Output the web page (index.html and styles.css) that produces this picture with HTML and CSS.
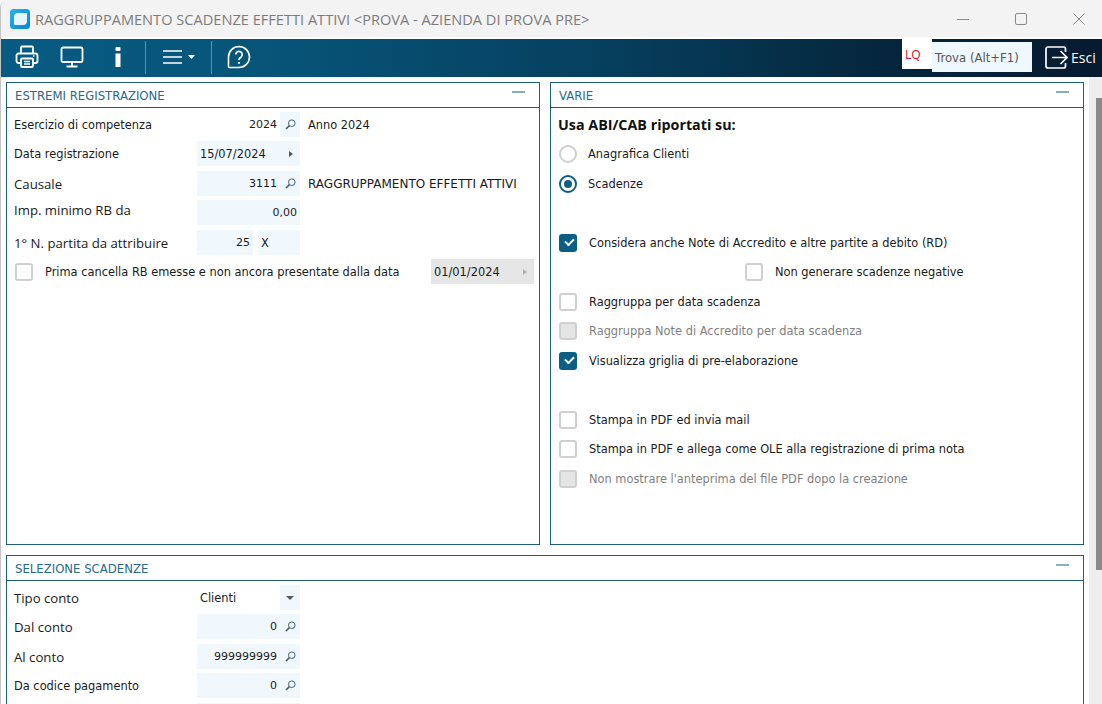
FILE: index.html
```html
<!DOCTYPE html>
<html lang="it">
<head>
<meta charset="utf-8">
<title>Raggruppamento scadenze effetti attivi</title>
<link rel="stylesheet" href="styles.css">
</head>
<body>
<div class="window">
  <header class="titlebar">
    <svg class="logo" width="20" height="20" viewBox="0 0 20 20"><defs><linearGradient id="lg" x1="0" y1="0" x2="1" y2="1"><stop offset="0" stop-color="#27b4ee"/><stop offset="1" stop-color="#0d84cf"/></linearGradient></defs><rect width="20" height="20" rx="3.500" fill="url(#lg)"/><path d="M8 4h8a1 1 0 0 1 1 1v7a4 4 0 0 1-4 4H5a1 1 0 0 1-1-1V8a4 4 0 0 1 4-4z" fill="#e6f5fd"/></svg>
    <span class="title">RAGGRUPPAMENTO SCADENZE EFFETTI ATTIVI &lt;PROVA - AZIENDA DI PROVA PRE&gt;</span>
    <div class="winctl">
      <svg width="12" height="12" viewBox="0 0 12 12"><path d="M0 6.500h12" stroke="#8a8a8a" fill="none"/></svg>
      <svg width="12" height="12" viewBox="0 0 12 12"><rect x=".5" y=".5" width="11" height="11" rx="1.500" stroke="#8a8a8a" fill="none"/></svg>
      <svg width="12" height="12" viewBox="0 0 12 12"><path d="M.5.500l11 11M11.500.500l-11 11" stroke="#8a8a8a" fill="none"/></svg>
    </div>
  </header>
  <nav class="toolbar">
    <button class="tool t-print"><svg width="24" height="24" viewBox="0 0 24 24" fill="none" stroke="#fff" stroke-width="1.800"><path d="M6 8V2.500a1 1 0 0 1 1-1h10a1 1 0 0 1 1 1V8M6 18H3.500a2 2 0 0 1-2-2v-5.500a2 2 0 0 1 2-2h17a2 2 0 0 1 2 2V16a2 2 0 0 1-2 2H18"/><rect x="6" y="13.500" width="12" height="8.500" rx="1"/><path d="M9 16.500h6M9 19h6" stroke-width="1.300"/><path d="M18 11h1.500" stroke-width="1.500"/></svg></button>
    <button class="tool t-screen"><svg width="24" height="22" viewBox="0 0 24 22" fill="none" stroke="#fff" stroke-width="1.800"><rect x="1.500" y="1.500" width="21" height="14.500" rx="1.500"/><path d="M12 16v4M6.500 20.500h11"/></svg></button>
    <button class="tool t-info"><svg width="8" height="20" viewBox="0 0 8 20" fill="#fff"><rect x="1.500" y="0" width="5" height="4" rx="1"/><rect x="1.500" y="6.500" width="5" height="13.500"/></svg></button>
    <span class="sep sep-a"></span>
    <button class="tool t-menu"><svg width="34" height="16" viewBox="0 0 34 16" fill="none" stroke="#fff" stroke-width="1.500"><path d="M0 2h19M0 8h19M0 14h19"/><path d="M25 6h7l-3.500 4z" fill="#fff" stroke="none"/></svg></button>
    <span class="sep sep-b"></span>
    <button class="tool t-help"><svg width="24" height="24" viewBox="0 0 24 24" fill="none" stroke="#fff" stroke-width="1.600"><path d="M12 1.500a10.500 10.500 0 0 1 0 21H2.500a1 1 0 0 1-1-1V12A10.500 10.500 0 0 1 12 1.500z"/><path d="M8.800 9.500a3.200 3.200 0 1 1 5 2.700c-1.200.8-1.800 1.300-1.800 2.800" stroke-width="1.800"/><path d="M12 17v1.800" stroke-width="2"/></svg></button>
    <div class="tool-right">
      <div class="lq">LQ</div>
      <div class="find">Trova (Alt+F1)</div>
      <div class="exit"><svg width="23" height="23" viewBox="0 0 23 23" fill="none" stroke="#fff" stroke-width="1.700"><path d="M20.500 6V3a2 2 0 0 0-2-2H3a2 2 0 0 0-2 2v17a2 2 0 0 0 2 2h15.500a2 2 0 0 0 2-2v-3"/><path d="M7 11.500h15M15.500 5l6.500 6.500-6.500 6.500"/></svg><span>Esci</span></div>
    </div>
  </nav>
  <div class="main">
    <main class="content">
      <div class="top">
        <section class="panel">
          <div class="phead"><span>ESTREMI REGISTRAZIONE</span><i class="dash"></i></div>
          <div class="pbody">
            <div class="row"><label class="lab">Esercizio di competenza</label><div class="field plain"><span class="val">2024</span><span class="cell"><svg class="lens" viewBox="0 0 11 11"><circle cx="6.800" cy="4.200" r="3.300"/><path d="M4.400 6.600L1 10" stroke-width="1.600"/></svg></span></div><span class="desc">Anno 2024</span></div>
            <div class="row"><label class="lab">Data registrazione</label><div class="field date"><span class="val left">15/07/2024</span><span class="cell"><i class="arrow"></i></span></div></div>
            <div class="row"><label class="lab big">Causale</label><div class="field"><span class="val">3111</span><span class="cell"><svg class="lens" viewBox="0 0 11 11"><circle cx="6.800" cy="4.200" r="3.300"/><path d="M4.400 6.600L1 10" stroke-width="1.600"/></svg></span></div><span class="desc caps">RAGGRUPPAMENTO EFFETTI ATTIVI</span></div>
            <div class="row"><label class="lab big high">Imp. minimo RB da</label><div class="field"><span class="val end">0,00</span></div></div>
            <div class="row"><label class="lab big">1° N. partita da attribuire</label><div class="split"><div class="field short"><span class="val end">25</span></div><div class="field rest"><span class="val left">X</span></div></div></div>
            <div class="row"><label class="check first"><i class="box"></i><span>Prima cancella RB emesse e non ancora presentate dalla data</span></label><div class="field dis"><span class="val left">01/01/2024</span><span class="cell"><i class="arrow"></i></span></div></div>
          </div>
        </section>
        <section class="panel">
          <div class="phead"><span>VARIE</span><i class="dash"></i></div>
          <div class="pbody wide">
            <div class="row"><strong class="head">Usa ABI/CAB riportati su:</strong></div>
            <div class="row"><label class="check radio"><i class="circle"></i><span>Anagrafica Clienti</span></label></div>
            <div class="row"><label class="check radio"><i class="circle on"></i><span>Scadenze</span></label></div>
            <div class="row"></div>
            <div class="row"><label class="check"><i class="box on"></i><span>Considera anche Note di Accredito e altre partite a debito (RD)</span></label></div>
            <div class="row"><label class="check nested"><i class="box"></i><span>Non generare scadenze negative</span></label></div>
            <div class="row"><label class="check"><i class="box"></i><span>Raggruppa per data scadenza</span></label></div>
            <div class="row"><label class="check off"><i class="box"></i><span>Raggruppa Note di Accredito per data scadenza</span></label></div>
            <div class="row"><label class="check"><i class="box on"></i><span>Visualizza griglia di pre-elaborazione</span></label></div>
            <div class="row"></div>
            <div class="row"><label class="check"><i class="box"></i><span>Stampa in PDF ed invia mail</span></label></div>
            <div class="row"><label class="check"><i class="box"></i><span>Stampa in PDF e allega come OLE alla registrazione di prima nota</span></label></div>
            <div class="row"><label class="check off"><i class="box"></i><span>Non mostrare l'anteprima del file PDF dopo la creazione</span></label></div>
          </div>
        </section>
      </div>
      <section class="panel bottom">
        <div class="phead"><span>SELEZIONE SCADENZE</span><i class="dash"></i></div>
        <div class="pbody">
          <div class="row"><label class="lab big">Tipo conto</label><div class="field plain"><span class="val left">Clienti</span><span class="cell"><i class="caret"></i></span></div></div>
          <div class="row"><label class="lab big">Dal conto</label><div class="field"><span class="val">0</span><span class="cell"><svg class="lens" viewBox="0 0 11 11"><circle cx="6.800" cy="4.200" r="3.300"/><path d="M4.400 6.600L1 10" stroke-width="1.600"/></svg></span></div></div>
          <div class="row"><label class="lab big">Al conto</label><div class="field"><span class="val">999999999</span><span class="cell"><svg class="lens" viewBox="0 0 11 11"><circle cx="6.800" cy="4.200" r="3.300"/><path d="M4.400 6.600L1 10" stroke-width="1.600"/></svg></span></div></div>
          <div class="row"><label class="lab">Da codice pagamento</label><div class="field"><span class="val">0</span><span class="cell"><svg class="lens" viewBox="0 0 11 11"><circle cx="6.800" cy="4.200" r="3.300"/><path d="M4.400 6.600L1 10" stroke-width="1.600"/></svg></span></div></div>
          <div class="row"><label class="lab"></label><div class="field"></div></div>
        </div>
      </section>
    </main>
    <aside class="scroll"><div class="thumb"></div></aside>
  </div>
</div>
</body>
</html>
```
FILE: styles.css
```css
* { box-sizing: border-box; }
html, body { margin: 0; padding: 0; height: 100%; overflow: hidden; background: #fff; }
body { font-family: "DejaVu Sans", sans-serif; font-size: 11.4px; color: #1a1a1a; }
.window { width: 1102px; height: 704px; display: flex; flex-direction: column; overflow: hidden; border-left: 1px solid #c4c4c4; border-top-left-radius: 8px; }
.titlebar { height: 37px; margin-bottom: 2px; background: #f3f3f3; display: flex; align-items: center; padding-left: 9px; flex: none; }
.logo { flex: none; }
.title { margin-left: 5px; font-family: "Open Sans", sans-serif; font-size: 14.600px; color: #7c7c7c; white-space: nowrap; }
.winctl { margin-left: auto; display: flex; gap: 46px; margin-right: 17px; }
.toolbar { height: 38px; flex: none; display: flex; align-items: center; background: linear-gradient(90deg, #075b82 0%, #075478 25%, #063f5e 55%, #05283f 78%, #061a30 100%); padding: 0 0 2px 14px; }
.tool { background: none; border: 0; padding: 0; display: flex; align-items: center; justify-content: center; }
.t-screen { margin-left: 21px; }
.t-info { margin-left: 30px; }
.sep { width: 1px; height: 33px; background: #5f93ac; }
.sep-a { margin-left: 23px; }
.t-menu { margin-left: 17px; }
.sep-b { margin-left: 14px; }
.t-help { margin-left: 15px; }
.tool-right { margin-left: auto; display: flex; align-self: flex-start; height: 36px; }
.lq { width: 30px; height: 30px; background: #fff; color: #c8101e; font-family: "Open Sans", sans-serif; font-size: 12px; padding-left: 3px; line-height: 32px; }
.find { width: 100px; height: 30px; margin-top: 3px; background: #f0f8ff; color: #555; font-size: 11.700px; line-height: 32px; padding-left: 3px; }
.exit { width: 70px; display: flex; align-items: center; padding-left: 13px; gap: 3px; color: #fff; font-family: "Open Sans", sans-serif; font-size: 14px; white-space: nowrap; }
.main { flex: 1; display: flex; min-height: 0; }
.content { width: 1088px; padding: 5px 5px 0 5px; flex: none; }
.top { display: flex; gap: 10px; height: 463px; margin-bottom: 10px; }
.panel { flex: 1; border: 1px solid #1d5f7b; min-width: 0; }
.bottom { flex: none; height: 300px; }
.phead { height: 25px; border-bottom: 1px solid #1d5f7b; display: flex; align-items: center; justify-content: space-between; padding: 2px 14px 0 8px; color: #266a8c; font-size: 11.700px; }
.dash { width: 13px; height: 2px; background: #85b1c6; margin-bottom: 8px; }
.pbody { padding: 4px 7px 0 7px; }
.pbody.wide { padding-left: 8px; }
.row { height: 25px; margin-bottom: 5px; display: flex; align-items: center; white-space: nowrap; }
.row:nth-child(odd) { margin-bottom: 4px; }
.lab { width: 183px; flex: none; }
.big { font-family: "Open Sans", sans-serif; font-size: 13.200px; }
.high { position: relative; top: -3px; }
.field { width: 103px; height: 25px; flex: none; background: #f0f8fe; display: flex; align-items: center; justify-content: flex-end; }
.field.plain { background: #fff; }
.field.plain .cell { background: #f0f8fe; height: 25px; }
.val { flex: 1; text-align: right; padding-right: 3px; font-size: 11px; }
.val.left { text-align: left; padding: 0 0 0 3px; font-size: 11.400px; }
.val.end { padding-right: 3px; }
.cell { width: 20px; display: flex; align-items: center; justify-content: center; flex: none; }
.lens { width: 11px; height: 11px; fill: none; stroke: #45606f; stroke-width: 1; }
.arrow { width: 0; height: 0; border-left: 4px solid #555; border-top: 3.500px solid transparent; border-bottom: 3.500px solid transparent; margin-left: 1px; }
.caret { width: 0; height: 0; border-top: 4px solid #556; border-left: 4px solid transparent; border-right: 4px solid transparent; }
.desc { margin-left: 8px; }
.desc.caps { font-size: 12px; }
.split { display: flex; gap: 5px; width: 103px; }
.short { width: 56px; }
.rest { width: 42px; }
.dis { width: 103px; background: #e6e6e6; }
.dis .arrow { border-left-color: #b5b5b5; }
.check { display: flex; align-items: center; gap: 12px; }
.check.first { width: 417px; flex: none; padding-left: 1px; }
.check.radio { gap: 11px; }
.box { width: 18px; height: 18px; border: 2px solid #d0d0d0; border-radius: 3px; background: #fff; flex: none; position: relative; }
.box.on { background: #0b5f85; border-color: #0b5f85; }
.box.on::after { content: ""; position: absolute; left: 3.500px; top: 2px; width: 7px; height: 4px; border-left: 2px solid #fff; border-bottom: 2px solid #fff; transform: rotate(-45deg); }
.off .box { background: #e4e4e4; }
.off span { color: #7f7f7f; }
.nested { margin-left: 186px; }
.circle { width: 18px; height: 18px; border: 2px solid #cfcfcf; border-radius: 50%; background: #fff; flex: none; position: relative; }
.circle.on { border-color: #0b5f85; }
.circle.on::after { content: ""; position: absolute; left: 3px; top: 3px; width: 8px; height: 8px; border-radius: 50%; background: #0b5f85; }
.head { font-family: "Open Sans", sans-serif; font-size: 14.300px; font-weight: 700; color: #111; margin-left: -1px; }
.scroll { flex: 1; background: #eeeeee; padding: 21px 0 0 7px; }
.thumb { height: 472px; background: #8a8a8a; }
```
